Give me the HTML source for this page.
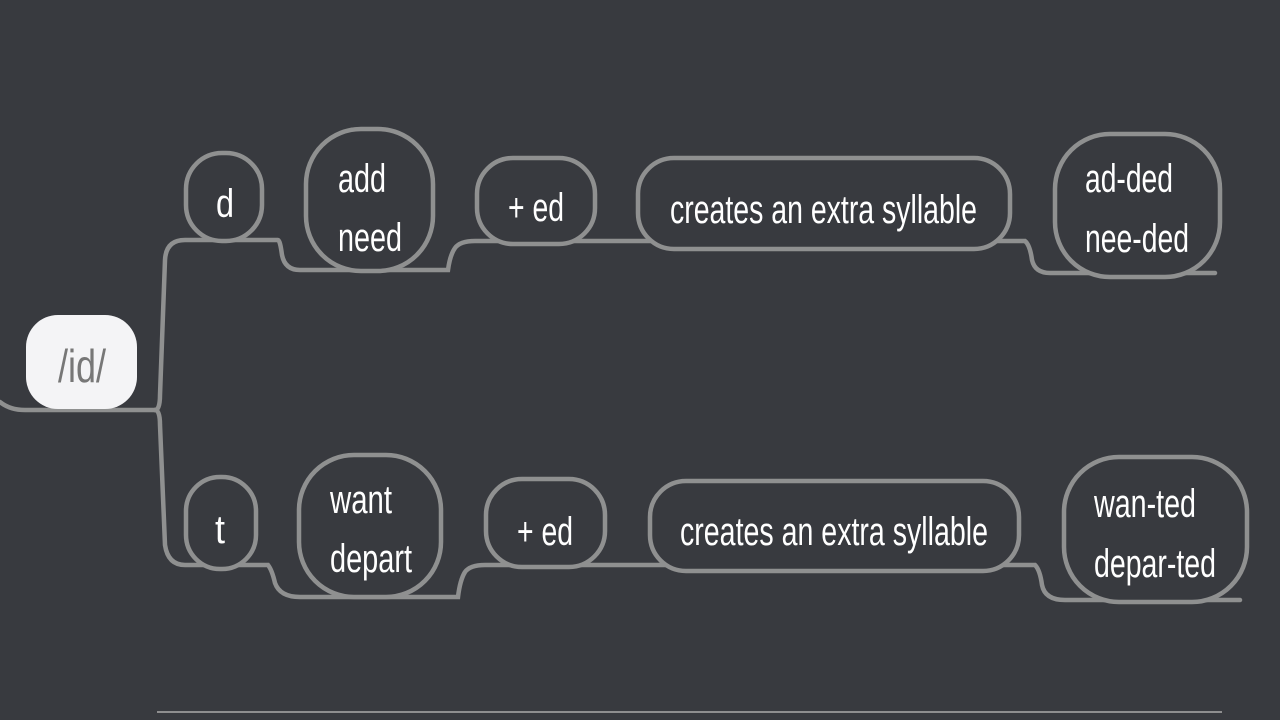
<!DOCTYPE html>
<html><head><style>
html,body{margin:0;padding:0;background:#383a3f;width:1280px;height:720px;overflow:hidden}
svg{display:block}
text{font-family:"Liberation Sans",sans-serif;fill:#fff;font-size:40px}
</style></head><body>
<svg width="1280" height="720" viewBox="0 0 1280 720">
<rect width="1280" height="720" fill="#383a3f"/>
<g fill="none" stroke="#8f9090" stroke-width="4.5" stroke-linecap="round">
<path d="M0 402 Q10 410 25 410 L155 410"/>
<path d="M155 410 Q160 410 160 395 L165 260 Q166 240 185 240 L278 240 Q280 240 282 255 Q285 270 300 270 L448 270 Q450 255 455 248 Q460 241 475 241 L1025 241 Q1030 245 1032 260 Q1035 273 1050 273 L1215 273"/>
<path d="M155 410 Q160 410 160 425 L165 545 Q168 565 185 565 L268 565 Q272 570 275 583 Q280 597 300 597 L458 597 Q460 580 465 572 Q470 565 485 565 L1035 565 Q1040 570 1042 585 Q1045 600 1065 600 L1240 600"/>
<g fill="#383a3f">
<rect x="186" y="153" width="76" height="88" rx="36"/>
<rect x="306" y="129" width="127" height="142" rx="55"/>
<rect x="477" y="158" width="118" height="86" rx="36"/>
<rect x="638" y="158" width="372" height="91" rx="36"/>
<rect x="1055" y="134" width="165" height="143" rx="55"/>
<rect x="186" y="477" width="70" height="92" rx="34"/>
<rect x="299" y="455" width="142" height="142" rx="55"/>
<rect x="486" y="479" width="119" height="88" rx="36"/>
<rect x="650" y="481" width="369" height="90" rx="36"/>
<rect x="1064" y="457" width="183" height="145" rx="55"/>
</g>
</g>
<rect x="26" y="315" width="111" height="94" rx="32" fill="#f4f4f6"/>
<line x1="157" y1="712" x2="1222" y2="712" stroke="#aaa" stroke-width="1.5"/>
<text x="58" y="382" style="fill:#777;font-size:46px" textLength="48" lengthAdjust="spacingAndGlyphs">/id/</text>
<text x="216" y="217" textLength="18" lengthAdjust="spacingAndGlyphs">d</text>
<text x="338" y="192" textLength="48" lengthAdjust="spacingAndGlyphs">add</text>
<text x="338" y="251" textLength="64" lengthAdjust="spacingAndGlyphs">need</text>
<text x="508" y="221" textLength="56" lengthAdjust="spacingAndGlyphs">+ ed</text>
<text x="670" y="223" textLength="307" lengthAdjust="spacingAndGlyphs">creates an extra syllable</text>
<text x="1085" y="192" textLength="88" lengthAdjust="spacingAndGlyphs">ad-ded</text>
<text x="1085" y="252" textLength="104" lengthAdjust="spacingAndGlyphs">nee-ded</text>
<text x="215" y="543" textLength="10" lengthAdjust="spacingAndGlyphs">t</text>
<text x="330" y="513" textLength="62" lengthAdjust="spacingAndGlyphs">want</text>
<text x="330" y="572" textLength="82" lengthAdjust="spacingAndGlyphs">depart</text>
<text x="517" y="545" textLength="56" lengthAdjust="spacingAndGlyphs">+ ed</text>
<text x="680" y="545" textLength="308" lengthAdjust="spacingAndGlyphs">creates an extra syllable</text>
<text x="1094" y="517" textLength="102" lengthAdjust="spacingAndGlyphs">wan-ted</text>
<text x="1094" y="577" textLength="122" lengthAdjust="spacingAndGlyphs">depar-ted</text>
</svg>
</body></html>
